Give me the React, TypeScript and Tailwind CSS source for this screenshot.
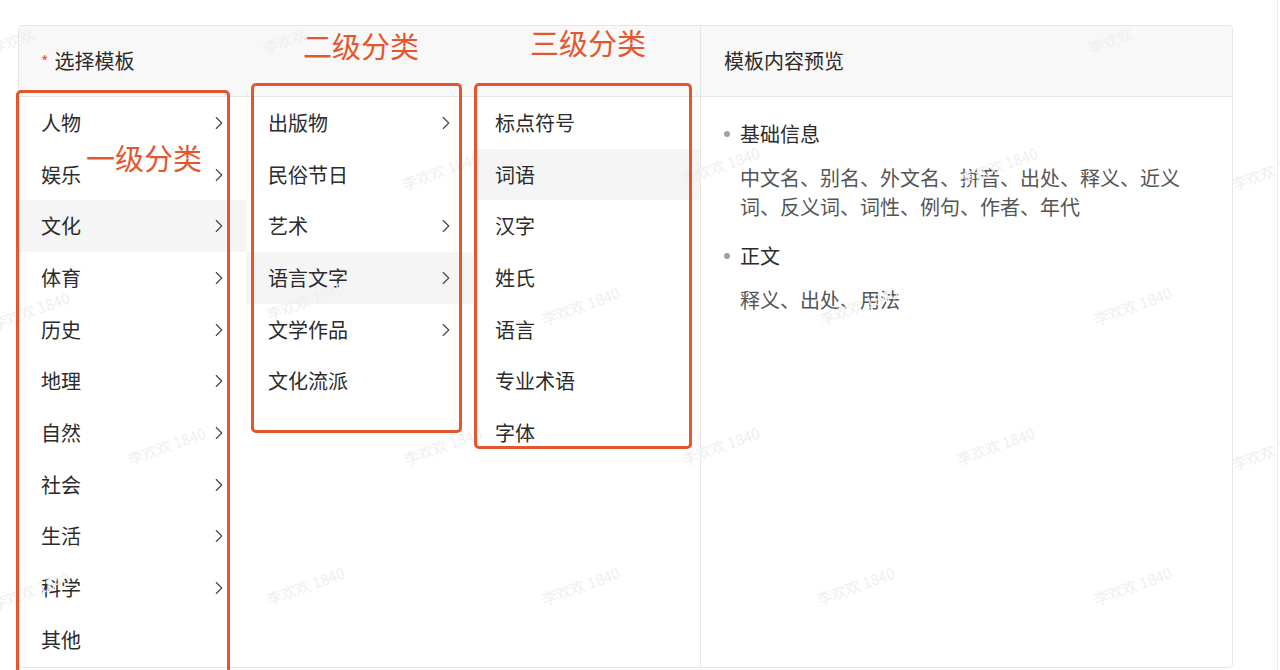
import { ChevronRight } from 'lucide-react';

const level1 = ['人物', '娱乐', '文化', '体育', '历史', '地理', '自然', '社会', '生活', '科学', '其他'];
const level2 = ['出版物', '民俗节日', '艺术', '语言文字', '文学作品', '文化流派'];
const level3 = ['标点符号', '词语', '汉字', '姓氏', '语言', '专业术语', '字体'];

const hasChildren1 = (name: string) => name !== '其他';
const hasChildren2 = ['出版物', '艺术', '语言文字', '文学作品'];

// 水印位置
const watermarks = [
  { x: -10, y: 30, t: '李欢欢' },
  { x: 262, y: 30, t: '李欢欢' },
  { x: 1088, y: 30, t: '李欢欢' },
  { x: 400, y: 160, t: '李欢欢 1840' },
  { x: 680, y: 155, t: '李欢欢 1840' },
  { x: 958, y: 155, t: '李欢欢 1840' },
  { x: 1230, y: 160, t: '李欢欢 1840' },
  { x: -10, y: 300, t: '李欢欢 1840' },
  { x: 265, y: 290, t: '李欢欢 1840' },
  { x: 540, y: 295, t: '李欢欢 1840' },
  { x: 818, y: 295, t: '李欢欢 1840' },
  { x: 1092, y: 295, t: '李欢欢 1840' },
  { x: 126, y: 435, t: '李欢欢 1840' },
  { x: 402, y: 435, t: '李欢欢 1840' },
  { x: 680, y: 435, t: '李欢欢 1840' },
  { x: 955, y: 435, t: '李欢欢 1840' },
  { x: 1230, y: 440, t: '李欢欢 1840' },
  { x: -10, y: 580, t: '李欢欢 1840' },
  { x: 265, y: 575, t: '李欢欢 1840' },
  { x: 540, y: 575, t: '李欢欢 1840' },
  { x: 815, y: 575, t: '李欢欢 1840' },
  { x: 1092, y: 575, t: '李欢欢 1840' },
];

function Row({ label, active, arrow }: { label: string; active?: boolean; arrow?: boolean }) {
  return (
    <div
      className={`flex h-[51.7px] items-center justify-between pl-[22px] pr-[16px] ${active ? 'bg-[#f5f5f5]' : ''}`}
    >
      <span>{label}</span>
      {arrow && <ChevronRight className="h-[22px] w-[22px] text-[#444]" strokeWidth={1.2} />}
    </div>
  );
}

export default function App() {
  return (
    <div
      className="relative flex h-[670px] w-[1280px] overflow-hidden bg-white text-[20px] text-[#2b2b2b]"
      style={{ fontFamily: '"Noto Sans CJK SC", "Noto Sans", sans-serif' }}
    >
      {/* 主面板 */}
      <div className="ml-[18px] mt-[25px] flex h-[643px] w-[1215px] overflow-hidden rounded-[4px] border border-[#e6e6e6]">
        {/* 选择模板 */}
        <div className="flex w-[682px] flex-col border-r border-[#e6e6e6]">
          <div className="flex h-[71px] shrink-0 items-center border-b border-[#e6e6e6] bg-[#f8f8f8] px-[22px]">
            <span className="mr-[6px] text-[16px] text-[#e4572e]">*</span>
            <span>选择模板</span>
          </div>
          <div className="flex flex-1">
            <div className="w-[227px]">
              {level1.map((n) => (
                <Row key={n} label={n} active={n === '文化'} arrow={hasChildren1(n)} />
              ))}
            </div>
            <div className="w-[227px]">
              {level2.map((n) => (
                <Row key={n} label={n} active={n === '语言文字'} arrow={hasChildren2.includes(n)} />
              ))}
            </div>
            <div className="w-[227px]">
              {level3.map((n) => (
                <Row key={n} label={n} active={n === '词语'} />
              ))}
            </div>
          </div>
        </div>

        {/* 模板内容预览 */}
        <div className="flex flex-1 flex-col">
          <div className="flex h-[71px] shrink-0 items-center border-b border-[#e6e6e6] bg-[#f8f8f8] px-[23px]">
            模板内容预览
          </div>
          <div className="pl-[23px] pr-[40px] pt-[22px]">
            <div className="flex items-center gap-[10px]">
              <span className="h-[6px] w-[6px] rounded-full bg-[#a0a0a0]" />
              <span>基础信息</span>
            </div>
            <p className="mt-[14px] pl-[16px] leading-[29px] text-[#555]">
              中文名、别名、外文名、拼音、出处、释义、近义词、反义词、词性、例句、作者、年代
            </p>
            <div className="mt-[20px] flex items-center gap-[10px]">
              <span className="h-[6px] w-[6px] rounded-full bg-[#a0a0a0]" />
              <span>正文</span>
            </div>
            <p className="mt-[14px] pl-[16px] leading-[29px] text-[#555]">释义、出处、用法</p>
          </div>
        </div>
      </div>
      <div className="flex-1" />
      <div className="mr-[2px] w-px bg-[#ededed]" />

      {/* 水印 */}
      {watermarks.map((w, i) => (
        <span
          key={i}
          className="pointer-events-none absolute -rotate-[20deg] whitespace-nowrap text-[15px] text-[#efefef]"
          style={{ left: w.x, top: w.y }}
        >
          {w.t}
        </span>
      ))}

      {/* 标注 */}
      <div className="pointer-events-none absolute left-[16px] top-[90px] h-[600px] w-[214px] rounded-[5px] border-[3px] border-[#e4572e]" />
      <div className="pointer-events-none absolute left-[251px] top-[83px] h-[350px] w-[211px] rounded-[5px] border-[3px] border-[#e4572e]" />
      <div className="pointer-events-none absolute left-[474px] top-[83px] h-[366px] w-[218px] rounded-[5px] border-[3px] border-[#e4572e]" />
      <span className="pointer-events-none absolute left-[86px] top-[137px] text-[29px] leading-[40px] text-[#e4572e]">一级分类</span>
      <span className="pointer-events-none absolute left-[303px] top-[25px] text-[29px] leading-[40px] text-[#e4572e]">二级分类</span>
      <span className="pointer-events-none absolute left-[530px] top-[22px] text-[29px] leading-[40px] text-[#e4572e]">三级分类</span>
    </div>
  );
}
